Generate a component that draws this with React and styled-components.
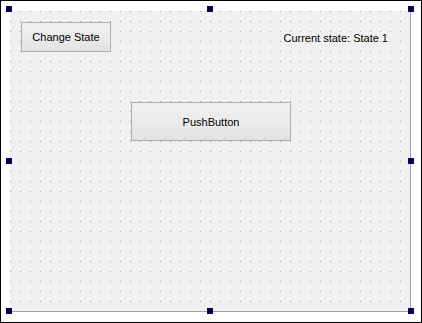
import React from 'react';
import styled, { createGlobalStyle } from 'styled-components';

const GlobalStyle = createGlobalStyle`
    html, body {
        margin: 0;
        padding: 0;
        background: #ffffff;
    }
    body {
        font-family: "Liberation Sans", Arial, sans-serif;
    }
`

const Frame = styled.div`
    width: 422px;
    height: 323px;
    box-sizing: border-box;
    border: 1px solid #000000;
    background: #ffffff;
    padding: 10px 0 0 9px;
`

const FormHolder = styled.div`
    position: relative;
    width: 401px;
    height: 301px;
`

const Form = styled.div`
    width: 401px;
    height: 301px;
    box-sizing: border-box;
    border-right: 1px solid #a0a0a0;
    border-bottom: 1px solid #a0a0a0;
    background-color: #f0f0f0;
    background-image:
        linear-gradient(to right, transparent 1px, #f0f0f0 1px),
        linear-gradient(to bottom, #a0a0a0 1px, #f0f0f0 1px);
    background-size: 10px 10px;
    padding: 11px 0 0 11px;
    display: flex;
    flex-direction: column;
`

const TopRow = styled.div`
    display: flex;
    align-items: center;
    justify-content: space-between;
    padding-right: 22px;
`

const Button = styled.button`
    width: ${p => p.w}px;
    height: ${p => p.h}px;
    margin: ${p => p.m || '0'};
    box-sizing: border-box;
    border: 1px solid #acacac;
    border-radius: 0;
    background: linear-gradient(to bottom, #f0f0f0 0%, #ebebeb 50%, #e3e3e3 100%);
    font-family: "Liberation Sans", Arial, sans-serif;
    font-size: 11px;
    color: #000000;
    padding: 0;
    display: flex;
    align-items: center;
    justify-content: center;
`

const StateLabel = styled.span`
    font-size: 11px;
    color: #000000;
    padding-top: 1px;
`

const Handle = styled.div`
    position: absolute;
    left: ${p => p.x}px;
    top: ${p => p.y}px;
    width: 6px;
    height: 6px;
    box-sizing: border-box;
    border: 1px solid #000080;
    background: #000028;
`

const handles = [
    [-4, -5], [197, -5], [398, -5],
    [-4, 147], [398, 147],
    [-4, 297], [197, 297], [398, 297],
]

export default function App() {
    return (
        <>
            <GlobalStyle />
            <Frame>
                <FormHolder>
                    <Form>
                        <TopRow>
                            <Button w={90} h={30}>Change State</Button>
                            <StateLabel>Current state: State 1</StateLabel>
                        </TopRow>
                        <Button w={160} h={39} m="50px 0 0 110px">PushButton</Button>
                    </Form>
                    {handles.map(([x, y], i) => (
                        <Handle key={i} x={x} y={y} />
                    ))}
                </FormHolder>
            </Frame>
        </>
    );
}
